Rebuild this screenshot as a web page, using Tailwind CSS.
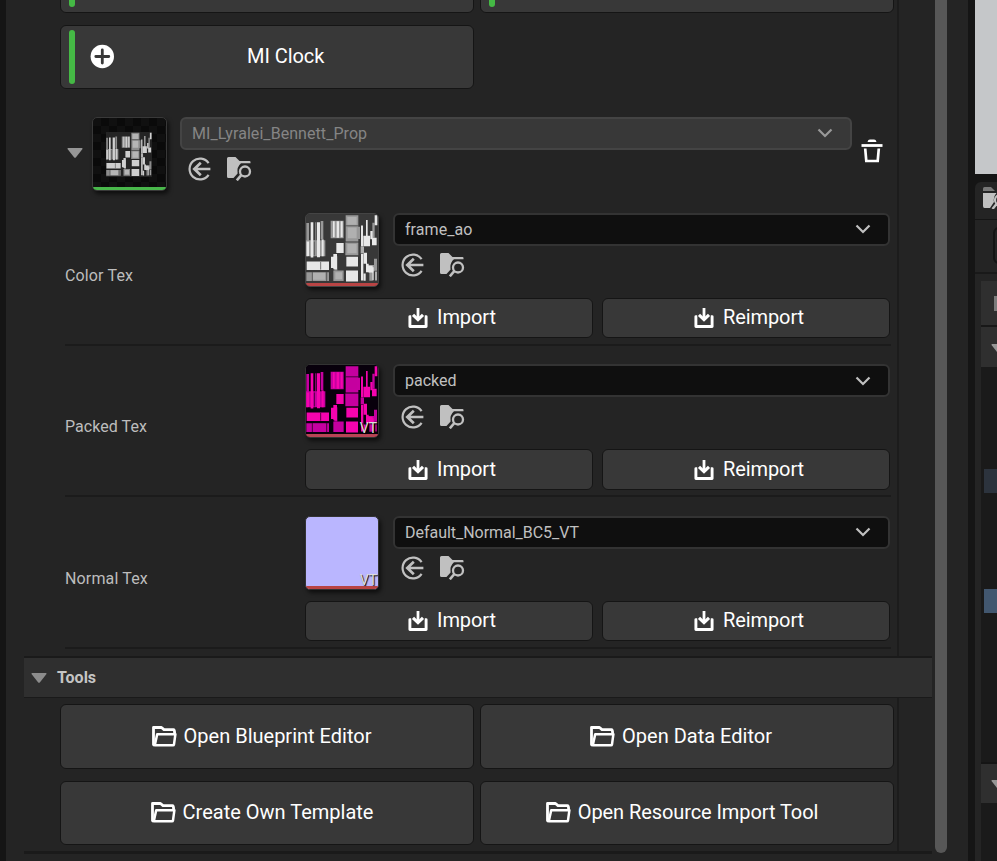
<!DOCTYPE html>
<html lang="en">
<head>
<meta charset="utf-8">
<title>Material Tools</title>
<script src="https://cdn.jsdelivr.net/npm/@tailwindcss/browser@4"></script>
</head>
<body class="w-[997px] h-[861px] overflow-hidden bg-[#151515] font-['Roboto',sans-serif] text-white">
<svg class="hidden">
  <symbol id="use" viewBox="0 0 24 24"><g fill="none" stroke="currentColor"><path d="M21.600 6.200A10.400 10.400 0 1 0 21.600 17.800" stroke-width="2.200"/><path d="M23.400 12H7.300M13.800 5.800 7.300 12l6.500 6.200" stroke-width="2.700"/></g></symbol>
  <symbol id="browse" viewBox="0 0 25 24"><path fill="currentColor" d="M1.500 0H8.500L12.500 4H22.500A1 1 0 0 1 23.500 5V6.300H14Q9.500 10 10.600 16.500L6.500 21H1.500A1.500 1.500 0 0 1 0 19.500V1.500A1.500 1.500 0 0 1 1.500 0Z"/><circle cx="18" cy="14.500" r="5" fill="none" stroke="currentColor" stroke-width="2.300"/><path d="M14.300 18.200 9.800 23.300" stroke="currentColor" stroke-width="2.600"/></symbol>
  <symbol id="chev" viewBox="0 0 16 10"><path d="M1.500 1.500 8 8l6.500-6.500" fill="none" stroke="currentColor" stroke-width="2.200"/></symbol>
  <symbol id="tri" viewBox="0 0 16 10"><path d="M1.200 0H14.800Q16 .3 15.300 1.300L9 9.200Q8 10.300 7 9.200L.7 1.300Q0 .3 1.200 0Z" fill="currentColor"/></symbol>
  <symbol id="imp" viewBox="0 0 20 20"><g fill="none" stroke="currentColor"><path d="M3.200 8.600H1.900V18.500H18.100V8.600H16.800" stroke-width="2.900" stroke-linejoin="round"/><path d="M10 0V11" stroke-width="2.800"/><path d="M5 6.800 10 11.600l5-4.800" stroke-width="3.100"/></g></symbol>
  <symbol id="open" viewBox="0 0 25 21"><g fill="none" stroke="currentColor" stroke-linejoin="round"><path d="M2.500 19.300 1.500 18.600V1.500H9.500L12 3.600H21.500Q22.600 3.600 22.600 7" stroke-width="2.800"/><path d="M2.800 19.300 5.200 8.200H23.400L22 18.400Q21.800 19.300 21 19.300Z" stroke-width="2.500"/></g></symbol>
  <symbol id="tex" viewBox="18 18 216 216" preserveAspectRatio="none">
    <rect x="18" y="18" width="216" height="216" fill="var(--bg)"/>
    <g fill="var(--g)">
      <path d="M19 46h8v54h-8zM46 44h3v56h-3zM62 40h8v58h-8zM18 100h58v50H18zM92 39h39v55H92zM137 22h38v82h-38zM172 58h8v38h-8zM136 107h39v40h-39zM103 150h9v44h-9zM19 200h68v28H19zM100 195h31v33h-31zM217 45h7v47h-7zM222 158h9v38h-9zM198 178h25v20h-25zM208 202h10v25h-10z"/>
    </g>
    <g fill="var(--w)">
      <path d="M32 44h8v110h-8zM51 44h9v109h-9zM65 98h6v52h-6zM20 104h7v46h-7zM99 41h5v50h-5zM110 41h7v51h-7zM122 41h6v50h-6zM109 109h22v31h-22zM93 152h10v35h-10zM100 143h11v48h-11zM20 167h67v26H20zM139 152h35v30h-35zM138 195h36v34h-36zM183 54h6v66h-6zM190 86h20v33h-20zM198 37h5v50h-5zM211 71h7v26h-7zM224 22h8v31h-8zM216 92h14v24h-14zM183 143h7v83h-7zM191 139h10v35h-10zM198 174h8v26h-8zM206 180h12v22h-12zM217 185h4v40h-4zM191 204h6v23h-6zM226 198h4v28h-4z"/>
    </g>
    <g fill="var(--m)">
      <path d="M142 27h28v25h-28zM143 60h27v34h-27zM142 112h28v29h-28zM38 202h37v22H38zM106 200h20v22h-20zM182 120h10v22h-10z"/>
    </g>
    <path d="M137 55h38M23 152h4M43 104v44M62 168v24M37 200v28M80 200v28" stroke="var(--bg)" stroke-width="2"/>
  </symbol>
</svg>

<div class="flex h-full w-full">
  <main class="ml-1.5 flex w-[962px] shrink-0 bg-[#242424] pl-[18px]">
    <div class="flex h-full w-[908px] flex-col">
      <section class="h-[656px] w-[875px] shrink-0 overflow-hidden border-r-2 border-[#1c1c1c] pl-9">
        <div class="flex h-[13px] w-[834px] items-end gap-1.5 overflow-hidden">
          <div class="flex h-[64px] w-[414px] items-end rounded-md border border-[#151515] bg-[#383838] pb-[5px] pl-2"><span class="h-[54px] w-1.5 rounded-full bg-[#45b945]"></span></div>
          <div class="flex h-[64px] w-[414px] items-end rounded-md border border-[#151515] bg-[#383838] pb-[5px] pl-2"><span class="h-[54px] w-1.5 rounded-full bg-[#45b945]"></span></div>
        </div>
        <div class="mt-3 flex h-16 w-[414px] items-center rounded-md border border-[#151515] bg-[#383838] pl-2">
          <span class="h-[54px] w-1.5 rounded-full bg-[#45b945]"></span>
          <svg class="ml-[15px] size-6 overflow-visible" viewBox="0 0 24 24"><circle cx="12.300" cy="11.500" r="11.700" fill="#fff"/><path d="M12.300 5v13M5.800 11.500h13" stroke="#383838" stroke-width="2.800" stroke-linecap="round"/></svg>
          <span class="-mt-[3px] w-[318px] pl-[133px] text-[20px] leading-6 tracking-[-0.06px] whitespace-nowrap">MI Clock</span>
        </div>

        <div class="mt-[28px] flex h-[75px] items-start">
          <svg class="mt-[31px] ml-[7px] h-[10px] w-4 text-[#969696]"><use href="#tri"/></svg>
          <div class="ml-[9px] flex h-[74px] w-[75px] flex-col items-center justify-between overflow-hidden rounded-[5px] border border-[#393939] bg-[#0b0b0b] bg-[repeating-conic-gradient(#0a0a0a_0_25%,#101010_0_50%)] bg-[length:16px_16px] shadow-[2px_3px_4px_#0009]">
            <svg class="mt-[14px] h-[45px] w-[46px] -translate-x-px [--bg:#242424] [--g:#8c8c8c] [--m:#b5b5b5] [--w:#cfcfcf]"><use href="#tex"/></svg>
            <span class="h-[3px] w-full bg-[#49b84b]"></span>
          </div>
          <div class="ml-[13px] w-[672px]">
            <div class="flex h-[33px] items-center justify-between rounded-md border-2 border-[#444] bg-[#383838] pr-[17px] pl-[10px] text-[#858585]"><span class="text-[16px] leading-5 tracking-[0.06px]">MI_Lyralei_Bennett_Prop</span><svg class="-mt-px h-[10px] w-4 text-[#999]"><use href="#chev"/></svg></div>
            <div class="mt-[6px] flex gap-4 pl-[7px] text-[#c0c0c0]"><svg class="mt-px size-6"><use href="#use"/></svg><svg class="mt-px h-6 w-[25px]"><use href="#browse"/></svg></div>
          </div>
          <svg class="mt-[22px] ml-[9px] h-6 w-[22px]" viewBox="0 0 22 24"><path d="M6.500 3Q7 .6 9 .6h4q2 0 2.500 2.400Z" fill="#fff"/><path d="M.5 6.500h21" stroke="#fff" stroke-width="2.800"/><path d="M4.200 9.500 5.300 22h11.400L17.800 9.500" fill="none" stroke="#fff" stroke-width="2.700"/></svg>
        </div>

        <div class="mt-[21px] ml-[5px] flex h-[133px] w-[826px] border-b-2 border-[#1b1b1b]">
          <span class="mt-[53px] w-[240px] text-[16px] leading-5 tracking-[0.14px] text-[#bdbdbd]">Color Tex</span>
          <div class="w-[586px]">
            <div class="flex">
              <div class="flex h-[74px] w-[74px] flex-col overflow-hidden rounded-[5px] border border-[#444] bg-[#333] shadow-[2px_3px_4px_#0009]"><svg class="h-[69px] w-full [--bg:#383838] [--g:#989898] [--m:#b0b0b0] [--w:#e8e8e8]"><use href="#tex"/></svg><span class="h-[3px] bg-[#b94444]"></span></div>
              <div class="ml-[14px] w-[497px]">
                <div class="flex h-[33px] items-center justify-between rounded-md border-2 border-[#333] bg-[#0f0f0f] pr-[17px] pl-[10px] text-[#c0c0c0]"><span class="text-[16px] leading-5 tracking-[0.06px]">frame_ao</span><svg class="-mt-px h-[10px] w-4"><use href="#chev"/></svg></div>
                <div class="mt-[6px] flex gap-4 pl-[7px] text-[#c0c0c0]"><svg class="mt-px size-6"><use href="#use"/></svg><svg class="mt-px h-6 w-[25px]"><use href="#browse"/></svg></div>
              </div>
            </div>
            <div class="mt-[11px] flex gap-[9px] text-[20px] leading-6 tracking-[-0.08px]">
              <div class="flex h-10 w-[288px] items-center justify-center gap-[9px] rounded-md border border-[#151515] bg-[#383838] pl-[6px]"><svg class="size-5"><use href="#imp"/></svg><span class="-mt-[2px]">Import</span></div>
              <div class="flex h-10 w-[288px] items-center justify-center gap-[9px] rounded-md border border-[#151515] bg-[#383838] pl-[6px]"><svg class="size-5"><use href="#imp"/></svg><span class="-mt-[2px]">Reimport</span></div>
            </div>
          </div>
        </div>

        <div class="mt-[18px] ml-[5px] flex h-[133px] w-[826px] border-b-2 border-[#1b1b1b]">
          <span class="mt-[53px] w-[240px] text-[16px] leading-5 tracking-[0.06px] text-[#bdbdbd]">Packed Tex</span>
          <div class="w-[586px]">
            <div class="flex">
              <div class="relative flex h-[74px] w-[74px] flex-col overflow-hidden rounded-[5px] border border-[#333] bg-black shadow-[2px_3px_4px_#0009]"><svg class="h-[69px] w-full [--bg:#08000c] [--g:#c600a0] [--m:#c5009f] [--w:#f504ae]"><use href="#tex"/></svg><span class="h-[3px] bg-[#b94455]"></span><span class="absolute right-px bottom-[2px] text-[14px] leading-[14px] text-[#ddd] [text-shadow:1px_1px_1px_#000]">VT</span></div>
              <div class="ml-[14px] w-[497px]">
                <div class="flex h-[33px] items-center justify-between rounded-md border-2 border-[#333] bg-[#0f0f0f] pr-[17px] pl-[10px] text-[#c0c0c0]"><span class="text-[16px] leading-5">packed</span><svg class="h-[10px] w-4"><use href="#chev"/></svg></div>
                <div class="mt-[7px] flex gap-4 pl-[7px] text-[#c0c0c0]"><svg class="mt-px size-6"><use href="#use"/></svg><svg class="mt-px h-6 w-[25px]"><use href="#browse"/></svg></div>
              </div>
            </div>
            <div class="mt-[11px] flex gap-[9px] text-[20px] leading-6 tracking-[-0.08px]">
              <div class="flex h-[41px] w-[288px] items-center justify-center gap-[9px] rounded-md border border-[#151515] bg-[#383838] pl-[6px]"><svg class="size-5"><use href="#imp"/></svg><span class="-mt-[2px]">Import</span></div>
              <div class="flex h-[41px] w-[288px] items-center justify-center gap-[9px] rounded-md border border-[#151515] bg-[#383838] pl-[6px]"><svg class="size-5"><use href="#imp"/></svg><span class="-mt-[2px]">Reimport</span></div>
            </div>
          </div>
        </div>

        <div class="mt-[19px] ml-[5px] flex h-[133px] w-[826px] border-b-2 border-[#1b1b1b]">
          <span class="mt-[53px] w-[240px] text-[16px] leading-5 tracking-[0.14px] text-[#bdbdbd]">Normal Tex</span>
          <div class="w-[586px]">
            <div class="flex">
              <div class="relative flex h-[74px] w-[74px] flex-col overflow-hidden rounded-[5px] border border-[#333] bg-[#bab6ff] shadow-[2px_3px_4px_#0009]"><span class="h-[69px]"></span><span class="h-[3px] bg-[#b94444]"></span><span class="absolute right-px bottom-[2px] text-[14px] leading-[14px] text-[#ddd] [text-shadow:1px_1px_1px_#000]">VT</span></div>
              <div class="ml-[14px] w-[497px]">
                <div class="flex h-[33px] items-center justify-between rounded-md border-2 border-[#333] bg-[#0f0f0f] pr-[17px] pl-[10px] text-[#c0c0c0]"><span class="text-[16px] leading-5 tracking-[-0.03px]">Default_Normal_BC5_VT</span><svg class="-mt-px h-[10px] w-4"><use href="#chev"/></svg></div>
                <div class="mt-[6px] flex gap-4 pl-[7px] text-[#c0c0c0]"><svg class="mt-px size-6"><use href="#use"/></svg><svg class="mt-px h-6 w-[25px]"><use href="#browse"/></svg></div>
              </div>
            </div>
            <div class="mt-[11px] flex gap-[9px] text-[20px] leading-6 tracking-[-0.08px]">
              <div class="flex h-10 w-[288px] items-center justify-center gap-[9px] rounded-md border border-[#151515] bg-[#383838] pl-[6px]"><svg class="size-5"><use href="#imp"/></svg><span class="-mt-[2px]">Import</span></div>
              <div class="flex h-10 w-[288px] items-center justify-center gap-[9px] rounded-md border border-[#151515] bg-[#383838] pl-[6px]"><svg class="size-5"><use href="#imp"/></svg><span class="-mt-[2px]">Reimport</span></div>
            </div>
          </div>
        </div>
      </section>

      <header class="flex h-[42px] shrink-0 items-center border-t-2 border-b border-[#1a1a1a] bg-[#2f2f2f] pl-[7px]">
        <svg class="h-[10px] w-4 text-[#8c8c8c]"><use href="#tri"/></svg>
        <span class="ml-[10px] text-[16px] leading-5 font-bold text-[#c4c4c4]">Tools</span>
      </header>
      <section class="h-[153px] w-[875px] shrink-0 border-r-2 border-[#1c1c1c] pt-[6px] pl-9">
        <div class="grid w-[834px] grid-cols-2 gap-x-1.5 gap-y-3 text-[20px] leading-6">
          <div class="flex h-[65px] items-center justify-center gap-[7px] rounded-md border border-[#151515] bg-[#383838] pr-[11px]"><svg class="h-[21px] w-[25px]"><use href="#open"/></svg><span class="-mt-px">Open Blueprint Editor</span></div>
          <div class="flex h-[65px] items-center justify-center gap-[7px] rounded-md border border-[#151515] bg-[#383838] pr-[12px]"><svg class="h-[21px] w-[25px]"><use href="#open"/></svg><span class="-mt-px">Open Data Editor</span></div>
          <div class="flex h-16 items-center justify-center gap-[7px] rounded-md border border-[#151515] bg-[#383838] pr-[10px]"><svg class="-mt-px h-[21px] w-[25px]"><use href="#open"/></svg><span class="-mt-[2px]">Create Own Template</span></div>
          <div class="flex h-16 items-center justify-center gap-[7px] rounded-md border border-[#151515] bg-[#383838] pr-[10px] tracking-[-0.08px]"><svg class="-mt-px h-[21px] w-[25px]"><use href="#open"/></svg><span class="-mt-[2px]">Open Resource Import Tool</span></div>
        </div>
      </section>
      <div class="h-[3px] shrink-0 bg-[#1a1a1a]"></div>
    </div>
    <div class="ml-[3px] h-[853px] w-3 rounded-b-full bg-[#575757]"></div>
  </main>

  <aside class="ml-[7px] flex w-[22px] shrink-0 flex-col">
    <div class="h-[174px] shrink-0 bg-[#c5c7c9]"></div>
    <div class="mt-2 h-[38px] shrink-0 overflow-hidden rounded-tl-md border-b border-[#151515] bg-[#242424] pt-[5px] pl-2"><svg class="h-[22px] w-[25px]" viewBox="0 0 25 22"><path d="M0 4V1.500Q0 0 1.500 0H8l4 4Z" fill="#777"/><path d="M0 6H13.500Q10 10 11 15L7 21H1.500Q0 21 0 19Z" fill="#c0c0c0"/><circle cx="17" cy="13" r="5" fill="none" stroke="#c0c0c0" stroke-width="2.200"/><path d="m13.500 17-4 5" stroke="#c0c0c0" stroke-width="2.400"/></svg></div>
    <div class="h-[54px] shrink-0 overflow-hidden border-b-2 border-[#191919] bg-[#242424] pt-[7px] pl-[18px]"><div class="h-[37px] w-10 rounded-md border-2 border-[#141414] bg-[#242424]"></div></div>
    <div class="flex grow flex-col bg-[#242424] pt-[7px] pl-1.5">
      <div class="flex h-[44px] shrink-0 items-center justify-end overflow-hidden bg-[#2f2f2f]"><span class="h-[15px] w-[3px] bg-[#7c7c7c]"></span></div>
      <div class="h-[42px] shrink-0 overflow-hidden border-t-2 border-[#181818] bg-[#2f2f2f] pt-[17px] pl-[10px]"><svg class="h-[10px] w-4 text-[#969696]"><use href="#tri"/></svg></div>
      <div class="h-[395px] shrink-0 bg-[#1a1a1a] pt-[102px] pl-[3px]"><div class="h-6 bg-[#2c333d]"></div><div class="mt-24 h-6 bg-[#42576f]"></div></div>
      <div class="h-[41px] shrink-0 overflow-hidden border-t-2 border-[#151515] bg-[#2f2f2f] pt-[16px] pl-[10px]"><svg class="h-[10px] w-4 text-[#969696]"><use href="#tri"/></svg></div>
      <div class="grow bg-[#1a1a1a]"></div>
    </div>
  </aside>
</div>
</body>
</html>
